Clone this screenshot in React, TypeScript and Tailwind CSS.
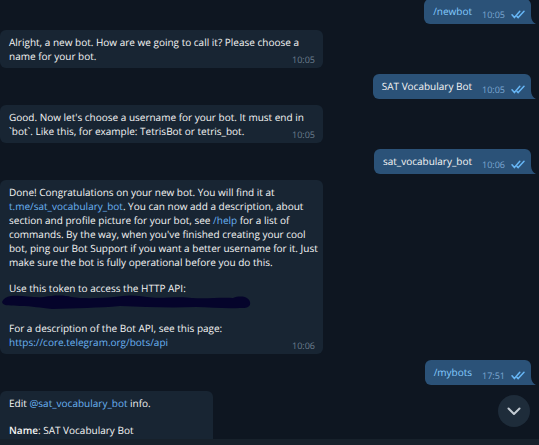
import type { ReactNode } from "react";

function Checks() {
  return (
    <svg width="14" height="9" viewBox="0 0 14 9" fill="none" stroke="#67b6f5" strokeWidth="1.5" strokeLinecap="round" strokeLinejoin="round" aria-hidden="true">
      <path d="M1 4.8 L3.4 7.6 L8.8 1.2" />
      <path d="M6 6.4 L7.2 7.6 L13 1.2" />
    </svg>
  );
}

function Outgoing({ children, time, command = false }: { children: ReactNode; time: string; command?: boolean }) {
  return (
    <div className="relative mr-2 flex h-[25px] shrink-0 items-center self-end rounded-md rounded-br-none bg-[#2b5278] pr-1.5 pl-[9px]">
      {command ? (
        <a href="#command" className="pb-0.5 text-[#84cbff]">{children}</a>
      ) : (
        <p className="pb-0.5">{children}</p>
      )}
      <div className="ml-2.5 flex items-center gap-1.5 pt-1.5 text-[9px] leading-3 text-[#7da8d3]">
        <time>{time}</time>
        <Checks />
      </div>
      <svg className="absolute bottom-0 left-full" width="5" height="8" viewBox="0 0 5 8" fill="#2b5278" aria-hidden="true">
        <path d="M0 0 C0.3 4 2 6.5 5 8 H0 Z" />
      </svg>
    </div>
  );
}

function Incoming({ children, time }: { children: ReactNode; time: string }) {
  return (
    <div className="relative w-full max-w-[323px] shrink-0 rounded-md bg-[#182533] py-[5px] pr-0.5 pl-[9px]">
      {children}
      <time className="absolute right-2 bottom-0.5 text-[9px] leading-3 text-[#6d7f8f]">{time}</time>
    </div>
  );
}

function TextLink({ href, children }: { href: string; children: ReactNode }) {
  return <a href={href} className="text-[#6ab3f3]">{children}</a>;
}

export default function App() {
  return (
    <div className="flex h-screen flex-col overflow-hidden bg-[#0e1621] font-['Open_Sans','Noto_Sans',sans-serif] text-[10px] leading-[14px] text-[#f5f5f5] [text-rendering:geometricPrecision]">
      <main className="relative flex min-h-0 flex-1 flex-col gap-1.5 overflow-hidden">
        <div className="-mt-px flex shrink-0 flex-col">
          <Outgoing time="10:05" command>/newbot</Outgoing>
        </div>
        <Incoming time="10:05">
          <p>Alright, a new bot. How are we going to call it? Please choose a<br />name for your bot.</p>
        </Incoming>
        <Outgoing time="10:05">SAT Vocabulary Bot</Outgoing>
        <Incoming time="10:05">
          <p>Good. Now let's choose a username for your bot. It must end in<br />`bot`. Like this, for example: TetrisBot or tetris_bot.</p>
        </Incoming>
        <Outgoing time="10:06">sat_vocabulary_bot</Outgoing>
        <Incoming time="10:06">
          <p>
            Done! Congratulations on your new bot. You will find it at<br />
            <TextLink href="#bot">t.me/sat_vocabulary_bot</TextLink>. You can now add a description, about<br />
            section and profile picture for your bot, see <TextLink href="#help">/help</TextLink> for a list of<br />
            commands. By the way, when you've finished creating your cool<br />
            bot, ping our Bot Support if you want a better username for it. Just<br />
            make sure the bot is fully operational before you do this.
          </p>
          <p className="mt-3">Use this token to access the HTTP API:</p>
          <svg className="-ml-2 h-[14px] w-[250px]" viewBox="0 0 250 14" fill="#05042b" aria-hidden="true">
            <path d="M1 7 Q3 2 10 1 C22 0 31 3 43 2 C53 0 64 0 70 2 C85 4 99 3 113 2 Q130 -1 146 2 C158 4 178 1 191 3 C207 4 220 2 232 3 C240 0 248 2 249 7 C250 12 246 13 239 13 C225 14 209 12 195 12 C169 13 144 12 119 11 C98 13 74 13 51 14 C39 13 32 11 19 11 C11 10 2 12 1 7 Z" />
          </svg>
          <p className="mt-3">
            For a description of the Bot API, see this page:<br />
            <TextLink href="#api">https://core.telegram.org/bots/api</TextLink>
          </p>
        </Incoming>
        <Outgoing time="17:51" command>/mybots</Outgoing>
        <section className="w-[213px] shrink-0 rounded-t-md bg-[#182533] px-[9px] pt-[5px] pb-3">
          <p>Edit <TextLink href="#bot">@sat_vocabulary_bot</TextLink> info.</p>
          <p className="mt-[13px]"><strong className="font-semibold">Name</strong>: SAT Vocabulary Bot</p>
        </section>
        <button type="button" aria-label="Scroll to bottom" className="absolute right-[9px] bottom-3 flex size-8 items-center justify-center rounded-full bg-[#1e2c3a]">
          <svg width="14" height="9" viewBox="0 0 14 9" fill="none" stroke="#c3cbd3" strokeWidth="2" strokeLinecap="round" strokeLinejoin="round" aria-hidden="true">
            <path d="M1.5 1.5 L7 7 L12.5 1.5" />
          </svg>
        </button>
      </main>
      <footer className="h-1.5 shrink-0 bg-[#17212b]" />
    </div>
  );
}
